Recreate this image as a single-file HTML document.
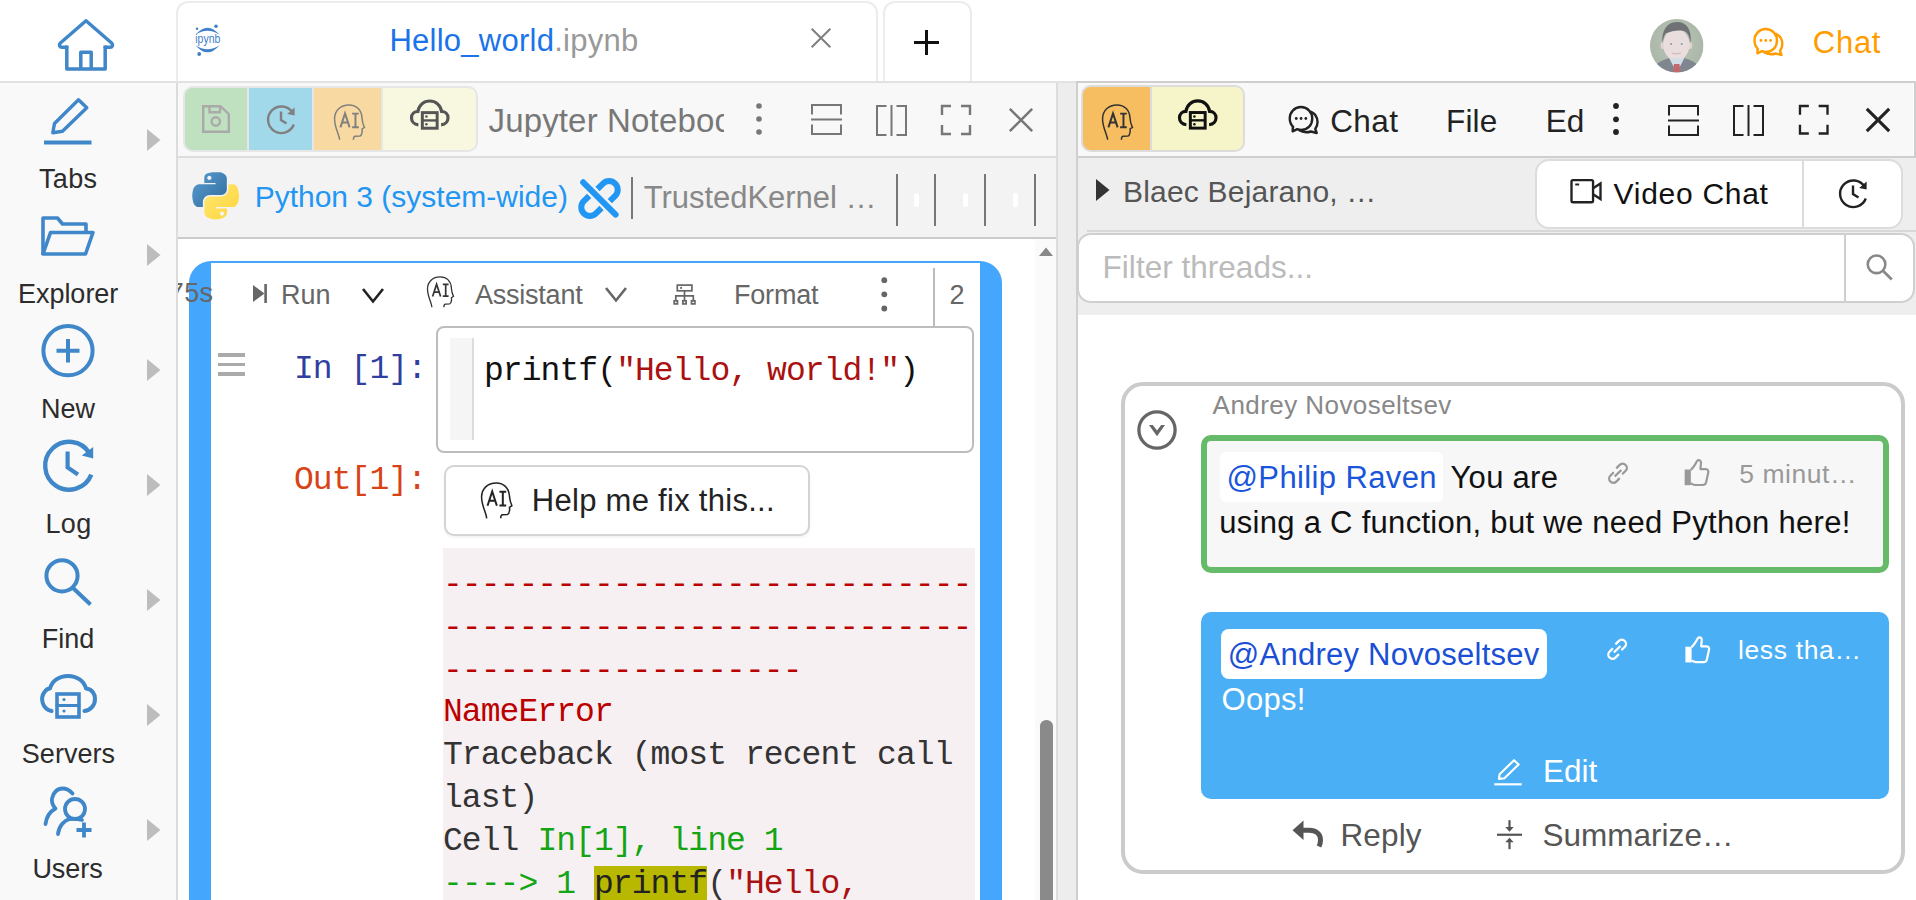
<!DOCTYPE html>
<html><head><meta charset="utf-8">
<style>
*{box-sizing:border-box;margin:0;padding:0}
html,body{width:1916px;height:900px;overflow:hidden;background:#fff;font-family:"Liberation Sans",sans-serif;}
.a{position:absolute}
svg{position:absolute;overflow:visible}
.t{position:absolute;white-space:nowrap;line-height:1}
</style></head><body>
<svg width="0" height="0" style="position:absolute">
<defs>
 <symbol id="ai" viewBox="0 0 27 31" overflow="visible">
  <path d="M4.9 31 C4.5 26 0.5 20.5 0.5 12.8 C0.5 5.5 5.8 0.7 13 0.7 C19.8 0.7 24 5.2 24.4 12 C24.6 15.2 25.2 17.6 26.5 20.2 L24.4 21.6 L24.6 23.6 C24.1 25 24.5 27.2 22.6 27.7 L18.4 28 C17.2 28.1 16.9 29 16.9 31" fill="none" stroke="currentColor" stroke-width="1.3"/>
  <path d="M5.6 20.2 L9.6 8 L13.6 20.2 M7 16 H12.2 M15.8 8.2 H21.6 M18.7 8.2 V20 M15.8 20 H21.6" fill="none" stroke="currentColor" stroke-width="1.7"/>
 </symbol>
 <symbol id="cloud" viewBox="0 0 40 31" overflow="visible">
  <path d="M8.5 26 C4 25.5 1.5 22.5 1.5 19 C1.5 15 4.5 12.5 8 12.5 C9 6 14 1.8 20 1.8 C26 1.8 31 6 32 12.5 C35.5 12.5 38.5 15 38.5 19 C38.5 22.5 36 25.5 31.5 26" fill="none" stroke="currentColor" stroke-width="3.2"/>
  <rect x="12.5" y="13.6" width="15" height="15.8" fill="none" stroke="currentColor" stroke-width="3"/>
  <path d="M12.5 21.5 H27.5" stroke="currentColor" stroke-width="2.4"/>
  <circle cx="16.6" cy="17.6" r="1.3" fill="currentColor"/><circle cx="16.6" cy="25.4" r="1.3" fill="currentColor"/>
 </symbol>
 <symbol id="hist" viewBox="0 0 30 30" overflow="visible">
  <path d="M26.5 8.5 A13.3 13.3 0 1 0 27.8 20.5" fill="none" stroke="currentColor" stroke-width="2.4"/>
  <path d="M28.6 3.5 L28.6 11.6 L21.2 10 Z" fill="currentColor"/>
  <path d="M15 7.5 V16 L20.5 19.5" fill="none" stroke="currentColor" stroke-width="2.4"/>
 </symbol>
 <symbol id="dots" viewBox="0 0 6 32" overflow="visible">
  <circle cx="3" cy="3" r="2.8" fill="currentColor"/><circle cx="3" cy="16" r="2.8" fill="currentColor"/><circle cx="3" cy="29" r="2.8" fill="currentColor"/>
 </symbol>
 <symbol id="hsplit" viewBox="0 0 31 31" overflow="visible">
  <path d="M1 10.5 V1 H30 V10.5 M1 20.5 V30 H30 V20.5 M0 15.4 H31" fill="none" stroke="currentColor" stroke-width="2"/>
 </symbol>
 <symbol id="vsplit" viewBox="0 0 31 31" overflow="visible">
  <path d="M10.5 1 H1 V30 H10.5 M20.5 1 H30 V30 H20.5 M15.5 0 V31" fill="none" stroke="currentColor" stroke-width="2"/>
 </symbol>
 <symbol id="full" viewBox="0 0 30 30" overflow="visible">
  <path d="M1 10 V1 H10 M20 1 H29 V10 M29 20 V29 H20 M10 29 H1 V20" fill="none" stroke="currentColor" stroke-width="2.4"/>
 </symbol>
 <symbol id="xx" viewBox="0 0 24 24" overflow="visible">
  <path d="M0.8 0.8 L23.2 23.2 M23.2 0.8 L0.8 23.2" fill="none" stroke="currentColor" stroke-width="2.5"/>
 </symbol>
 <symbol id="xxb" viewBox="0 0 24 24" overflow="visible">
  <path d="M0.8 0.8 L23.2 23.2 M23.2 0.8 L0.8 23.2" fill="none" stroke="currentColor" stroke-width="3.1"/>
 </symbol>
 <symbol id="chev" viewBox="0 0 22 15" overflow="visible">
  <path d="M1 1 L11 13.5 L21 1" fill="none" stroke="currentColor" stroke-width="2.6"/>
 </symbol>
 <symbol id="link" viewBox="0 0 24 23" overflow="visible">
  <path d="M10.2 6.5 L13.76 2.96 A4.3 4.3 0 0 1 19.84 9.04 L16.3 12.6 M13.8 16.5 L10.24 20.04 A4.3 4.3 0 0 1 4.16 13.96 L7.7 10.4 M8.6 14.9 L15.4 8.1" fill="none" stroke="currentColor" stroke-width="2.3"/>
 </symbol>
 <symbol id="thumb" viewBox="0 0 26 27" overflow="visible">
  <path d="M7.6 11 L10.5 7.5 C12 5.5 13 3.5 13.5 2.5 C14.5 0.5 17.5 0.6 17.8 3.5 L17.2 10.2 H22.5 C25 10.2 25.6 12.5 24.8 14.5 L22.8 23.5 C22.3 25.3 21 26 19.5 26 L12 26 C10 26 9 24.8 7.6 24.5" fill="none" stroke="currentColor" stroke-width="2.2" stroke-linejoin="round"/>
  <path d="M1.4 10.5 H7.6 V26.2 H1.4 Z" fill="currentColor"/>
 </symbol>
 <symbol id="pencil" viewBox="0 0 28 27" overflow="visible">
  <path d="M5.4 15.6 L20.2 1.2 L24.8 5.7 L10.3 19.6 L4.8 20.3 Z" fill="none" stroke="currentColor" stroke-width="2.2" stroke-linejoin="round"/>
  <path d="M0 25.8 H28" stroke="currentColor" stroke-width="2.2"/>
 </symbol>
 <symbol id="reply" viewBox="0 0 31 27" overflow="visible">
  <path d="M11.5 0.5 L0.5 10.3 L11.5 20 Z" fill="currentColor"/>
  <path d="M9 10.3 H17 C24 10.3 28.5 14 28.5 20 C28.5 22.5 28 24.5 27 26.5" fill="none" stroke="currentColor" stroke-width="5"/>
 </symbol>
 <symbol id="summ" viewBox="0 0 25 29" overflow="visible">
  <path d="M0 14.6 H25" stroke="currentColor" stroke-width="2.2"/>
  <path d="M12.5 0 V8" stroke="currentColor" stroke-width="2.2"/>
  <path d="M8.3 6.8 L16.7 6.8 L12.5 11.5 Z" fill="currentColor"/>
  <path d="M12.5 29 V21" stroke="currentColor" stroke-width="2.2"/>
  <path d="M8.3 22.2 L16.7 22.2 L12.5 17.5 Z" fill="currentColor"/>
 </symbol>
 <symbol id="chat2" viewBox="0 0 31 29" overflow="visible">
  <path d="M4.6 21.6 L4.4 26.4 L9 24.2 C10.3 24.7 11.6 25 13 25 C19.5 25 24 20 24 13.5 C24 7 19 2 12.7 2 C6.4 2 1.5 7 1.5 13.5 C1.5 16.8 2.8 19.8 5 22 Z" fill="none" stroke="currentColor" stroke-width="2.4" stroke-linejoin="round"/>
  <path d="M22.5 6.5 C26.5 8.5 29.3 12.5 29.3 17 C29.3 19.7 28.4 22 27 24 L28.5 28 L22.5 26.5 C21 27 19.5 27.3 18 27.3 C15 27.3 12.7 26.4 10.5 25" fill="none" stroke="currentColor" stroke-width="2.4" stroke-linejoin="round"/>
  <circle cx="8" cy="13.5" r="1.4" fill="currentColor"/><circle cx="12.8" cy="13.5" r="1.4" fill="currentColor"/><circle cx="17.6" cy="13.5" r="1.4" fill="currentColor"/>
 </symbol>
 <symbol id="search" viewBox="0 0 27 27" overflow="visible">
  <circle cx="10.5" cy="10.5" r="9" fill="none" stroke="currentColor" stroke-width="2.6"/>
  <path d="M17 17 L26 26" stroke="currentColor" stroke-width="2.8"/>
 </symbol>
 <symbol id="cam" viewBox="0 0 32 25" overflow="visible">
  <rect x="1.2" y="1.2" width="22" height="22.5" rx="1.5" fill="none" stroke="currentColor" stroke-width="2.4"/>
  <path d="M23.2 9.5 L30.8 4.5 V20.5 L23.2 15.5" fill="none" stroke="currentColor" stroke-width="2.4"/>
  <path d="M5 5.6 H9" stroke="currentColor" stroke-width="2"/>
 </symbol>
</defs></svg>
<div class="a" style="left:0px;top:0px;width:1916px;height:81px;background:#fff;"></div>
<div class="a" style="left:0px;top:81px;width:1916px;height:2px;background:#e2e2e2;"></div>
<div class="a" style="left:0px;top:83px;width:176px;height:817px;background:#f9f9f9;"></div>
<div class="a" style="left:176px;top:83px;width:2px;height:817px;background:#dcdcdc;"></div>
<svg class="a" style="left:0;top:0" width="180" height="900" viewBox="0 0 180 900" fill="none" stroke="#3f87c9" stroke-width="3.6" stroke-linejoin="round" stroke-linecap="round">
  <path d="M66.8 47.3 H62 C59.6 47.3 58.6 44.8 60.4 43 L86 20.8 L111.6 43 C113.4 44.8 112.4 47.3 110 47.3 H105.2" stroke-width="3.5"/>
  <path d="M66.8 45.5 V69 H105.2 V45.5" stroke-linecap="butt" stroke-width="3.5"/>
  <path d="M80.8 69 V52.2 H91.2 V69" stroke-linecap="butt" stroke-width="3.5"/>
  <path d="M54.5 123.5 L78.5 99.8 L86.8 107.8 L62.5 131.3 L52.8 132.8 Z" stroke-width="3.4"/>
  <path d="M44 142.5 H91.5" stroke-width="4" stroke-linecap="butt"/>
  <path d="M43 255 V218 H57.5 L62.5 224 H86 V232" stroke-linecap="butt"/>
  <path d="M43 254 L50.5 232.5 H93 L85.5 254 Z"/>
  <circle cx="68" cy="350.7" r="24.6" stroke-width="4"/>
  <path d="M56.5 350.7 H79.5 M68 339 V362.5" stroke-width="4" stroke-linecap="butt"/>
  <path d="M89.4 453.1 A23.9 23.9 0 1 0 91.3 474.6" stroke-width="4.4" stroke-linecap="butt"/>
  <path d="M93.2 447 L93.2 458.4 L81.8 455.4 Z" fill="#3f87c9" stroke="none"/>
  <path d="M67.6 451.5 V467.5 L78 474.5" stroke-width="4.2" stroke-linecap="butt" stroke-linejoin="miter"/>
  <circle cx="62" cy="575.8" r="15.6" stroke-width="4"/>
  <path d="M72.5 587.5 L90.5 604.5" stroke-width="4" stroke-linecap="butt"/>
  <path d="M51.5 711 C42 709 40 698 44.5 692 C46.5 689 49 688.5 50 688.5 C52 681 59 676 68 676 C77 676 84 681 86 688.5 C92 689 95 694 95 699 C95 705 91 710 84.5 711" stroke-width="4"/>
  <rect x="57" y="694" width="22" height="23" stroke-width="3.6" stroke-linejoin="miter"/>
  <path d="M57 705.5 H79" stroke-width="3"/>
  <circle cx="64" cy="699.5" r="1.6" fill="#3f87c9" stroke="none"/>
  <circle cx="64" cy="711" r="1.6" fill="#3f87c9" stroke="none"/>
  <path d="M45.5 824 C46.5 817 50 811.5 55.5 808.5 C52.5 805.5 51.5 802 52 798.5 C53 792.5 57.5 788.5 62.5 788.5 C66.5 788.5 70 790.5 72.5 793.5" stroke-width="3.8"/>
  <circle cx="75" cy="809" r="10" stroke-width="3.8"/>
  <path d="M58 834 C59 826 64 820.5 70 819 C74 818.5 78 819 82 820" stroke-width="3.8"/>
  <path d="M84 822.5 V837.5 M76.5 830 H91.5" stroke-width="3.8" stroke-linecap="butt"/>
</svg>
<svg class="a" style="left:0;top:0" width="180" height="900" viewBox="0 0 180 900" fill="#bdbdbd">
  <path d="M147 129 L160.5 140 L147 151 Z"/><path d="M147 244 L160.5 255 L147 266 Z"/>
  <path d="M147 359 L160.5 370 L147 381 Z"/><path d="M147 474 L160.5 485 L147 496 Z"/>
  <path d="M147 589 L160.5 600 L147 611 Z"/><path d="M147 704 L160.5 715 L147 726 Z"/>
  <path d="M147 819 L160.5 830 L147 841 Z"/>
</svg>
<div class="t" style="left:39.1px;top:165.7px;font-size:27px;color:#2c2c2c;font-family:'Liberation Sans',sans-serif;letter-spacing:0.27px;">Tabs</div>
<div class="t" style="left:17.9px;top:280.7px;font-size:27px;color:#2c2c2c;font-family:'Liberation Sans',sans-serif;letter-spacing:-0.01px;">Explorer</div>
<div class="t" style="left:41.0px;top:395.7px;font-size:27px;color:#2c2c2c;font-family:'Liberation Sans',sans-serif;letter-spacing:-0.05px;">New</div>
<div class="t" style="left:45.6px;top:510.7px;font-size:27px;color:#2c2c2c;font-family:'Liberation Sans',sans-serif;letter-spacing:0.25px;">Log</div>
<div class="t" style="left:41.7px;top:625.6px;font-size:27px;color:#2c2c2c;font-family:'Liberation Sans',sans-serif;letter-spacing:0.03px;">Find</div>
<div class="t" style="left:21.8px;top:740.6px;font-size:27px;color:#2c2c2c;font-family:'Liberation Sans',sans-serif;letter-spacing:0.04px;">Servers</div>
<div class="t" style="left:32.4px;top:855.6px;font-size:27px;color:#2c2c2c;font-family:'Liberation Sans',sans-serif;letter-spacing:-0.05px;">Users</div>
<div class="a" style="left:176px;top:1px;width:702px;height:80px;background:#fff;border:2px solid #ececec;border-radius:12px 12px 0 0;border-bottom:none;"></div>
<div class="a" style="left:882.5px;top:1px;width:89.5px;height:80px;background:#fff;border:2px solid #ececec;border-radius:12px 12px 0 0;border-bottom:none;"></div>
<svg class="a" style="left:185px;top:18px" width="45" height="45" viewBox="0 0 45 45">
 <path d="M10.5 16.8 Q22.5 2.5 34.5 16.8 Q22.5 8.8 10.5 16.8 Z" fill="#3f80c8"/>
 <path d="M10.5 27.2 Q22.5 41.5 34.5 27.2 Q22.5 35.2 10.5 27.2 Z" fill="#3f80c8"/>
 <circle cx="12" cy="10.8" r="1.2" fill="#3f80c8"/><circle cx="31" cy="8.3" r="1.8" fill="#3f80c8"/><circle cx="14.2" cy="36" r="1.9" fill="#3f80c8"/>
 <text x="22.8" y="25" font-family="Liberation Sans" font-size="12.8" fill="#3f80c8" text-anchor="middle" textLength="25" lengthAdjust="spacingAndGlyphs">ipynb</text>
</svg>
<div class="t" style="left:389.4px;top:24.7px;font-size:31px;color:#1a73e8;font-family:'Liberation Sans',sans-serif;letter-spacing:0.26px;">Hello_world<span style="color:#999">.ipynb</span></div>
<svg class="a" style="left:811px;top:28px;color:#808080" width="20" height="20"><use href="#xx" width="20" height="20"/></svg>
<svg class="a" style="left:913px;top:29px" width="27" height="27"><path d="M1 13.5 H26 M13.5 1 V26" stroke="#111" stroke-width="3"/></svg>
<svg class="a" style="left:1650.2px;top:19.2px" width="53.5" height="53.5" viewBox="0 0 54 54">
 <defs><clipPath id="avc"><circle cx="27" cy="27" r="27"/></clipPath>
 <radialGradient id="avbg" cx="50%" cy="45%" r="60%"><stop offset="0" stop-color="#b9c4b6"/><stop offset="1" stop-color="#a9b6a6"/></radialGradient></defs>
 <g clip-path="url(#avc)">
  <rect width="54" height="54" fill="url(#avbg)"/>
  <ellipse cx="12.8" cy="27" rx="2.2" ry="3.5" fill="#e0d2d0"/><ellipse cx="40.5" cy="27" rx="2.2" ry="3.5" fill="#e0d2d0"/>
  <ellipse cx="26.6" cy="26" rx="13.2" ry="16" fill="#e9dedd"/>
  <path d="M12.5 24 C11.5 12 17 3 27 3 C37 3 42 10 41.2 24 C39.5 17 38 13 34 12 C28 11 22 12 16 14.5 C14 17 13.5 20 12.5 24 Z" fill="#6f7174"/>
  <path d="M1 54 C3 46 11 41.5 19.5 39.5 L27 54 L34.5 39.5 C43 41.5 51 46 53 54 Z" fill="#80868f"/>
  <path d="M19.5 39.5 L34.5 39.5 L27 54 Z" fill="#d2dde8"/>
  <path d="M24.3 45.5 L29.7 45.5 L31 54 L23 54 Z" fill="#c06a6e"/>
  <circle cx="21.2" cy="25.2" r="1.1" fill="#8a9bb0"/><circle cx="32" cy="25.2" r="1.1" fill="#8a9bb0"/>
  <path d="M22 34.5 Q26.5 36 31 34.5" stroke="#c9b4b4" stroke-width="1" fill="none"/>
 </g>
</svg>
<svg class="a" style="left:1753px;top:27px;color:#ff9d00" width="31" height="29"><use href="#chat2" width="31" height="29"/></svg>
<div class="t" style="left:1812.8px;top:26.7px;font-size:31px;color:#ff9d00;font-family:'Liberation Sans',sans-serif;letter-spacing:0.73px;">Chat</div>
<div class="a" style="left:178px;top:83px;width:878px;height:73px;background:#f8f8f8;"></div>
<div class="a" style="left:178px;top:156px;width:878px;height:2px;background:#dcdcdc;"></div>
<div class="a" style="left:178px;top:158px;width:878px;height:79px;background:#f3f3f3;"></div>
<div class="a" style="left:178px;top:237px;width:878px;height:2px;background:#cbcbcb;"></div>
<div class="a" style="left:178px;top:239px;width:878px;height:661px;background:#fff;"></div>
<div class="a" style="left:1056px;top:83px;width:2px;height:817px;background:#dcdcdc;"></div>
<div class="a" style="left:1058px;top:83px;width:18px;height:817px;background:#ededed;"></div>
<div class="a" style="left:183px;top:85.5px;width:295px;height:66.5px;background:#e6e6e6;border:none;border-radius:10px;"></div>
<div class="a" style="left:185px;top:87.5px;width:291px;height:62.5px;border-radius:8px;overflow:hidden"><div class="a" style="left:0;top:0;width:62px;height:63px;background:#bfe1bf"></div><div class="a" style="left:64px;top:0;width:63px;height:63px;background:#a1d9ea"></div><div class="a" style="left:129px;top:0;width:67px;height:63px;background:#f8d9a1"></div><div class="a" style="left:198px;top:0;width:93px;height:63px;background:#f8f8e1"></div></div>
<svg class="a" style="left:202px;top:105px" width="28" height="28" viewBox="0 0 28 28" fill="none" stroke="#aaa" stroke-width="2.4">
 <path d="M1.2 1.2 H18.5 L26.8 9.2 V26.8 H1.2 Z"/><path d="M7.5 1.2 V7.2 H18 V1.2"/><circle cx="13.8" cy="16.5" r="4.2"/></svg>
<svg class="a" style="left:265.5px;top:103.5px;color:#808080;" width="30" height="30"><use href="#hist" width="30" height="30"/></svg>
<svg class="a" style="left:333.5px;top:103.5px;color:#808080;" width="31" height="36"><use href="#ai" width="31" height="36"/></svg>
<svg class="a" style="left:410px;top:98.8px;color:#555;" width="39.5" height="31"><use href="#cloud" width="39.5" height="31"/></svg>
<div class="t" style="left:488.5px;top:103.8px;font-size:33px;color:#777;font-family:'Liberation Sans',sans-serif;width:235.5px;overflow:hidden;letter-spacing:0.15px">Jupyter Noteboc</div>
<svg class="a" style="left:756.3px;top:103px;color:#777;" width="6" height="32"><use href="#dots" width="6" height="32"/></svg>
<svg class="a" style="left:811px;top:104px;color:#777;" width="31" height="31"><use href="#hsplit" width="31" height="31"/></svg>
<svg class="a" style="left:875.5px;top:104.5px;color:#777;" width="31" height="31"><use href="#vsplit" width="31" height="31"/></svg>
<svg class="a" style="left:941px;top:105px;color:#777;" width="30" height="30"><use href="#full" width="30" height="30"/></svg>
<svg class="a" style="left:1008.5px;top:107.5px;color:#777;" width="24" height="24"><use href="#xx" width="24" height="24"/></svg>
<svg class="a" style="left:192px;top:171.5px" width="47" height="47" viewBox="0 0 110 110">
<defs><linearGradient id="pyb" x1="0" y1="0" x2="1" y2="1"><stop offset="0" stop-color="#5a9fd4"/><stop offset="1" stop-color="#306998"/></linearGradient>
<linearGradient id="pyy" x1="0" y1="0" x2="1" y2="1"><stop offset="0" stop-color="#ffe873"/><stop offset="1" stop-color="#ffd43b"/></linearGradient></defs>
<path fill="url(#pyb)" d="M54.9 0.5c-4.6 0-9 .4-12.8 1.1C30.7 3.6 28.7 7.7 28.7 15.4v10.1h26.4v3.4H18.9c-7.7 0-14.4 4.6-16.5 13.3-2.4 10-2.5 16.2 0 26.7 1.9 7.8 6.3 13.3 14 13.3h9.1v-12c0-8.7 7.5-16.3 16.5-16.3h26.3c7.3 0 13.2-6 13.2-13.3V15.4c0-7.1-6-12.5-13.2-13.7C73.8 .9 69.1 .5 54.9 .5zM40.6 8.6c2.7 0 5 2.3 5 5 0 2.8-2.2 5-5 5-2.7 0-5-2.2-5-5 0-2.7 2.2-5 5-5z"/>
<path fill="url(#pyy)" d="M85.1 28.9v11.7c0 9-7.7 16.6-16.5 16.6H42.3c-7.2 0-13.2 6.200-13.2 13.300v25.1c0 7.2 6.2 11.4 13.2 13.4 8.4 2.5 16.4 2.9 26.3 0 6.6-1.9 13.2-5.7 13.2-13.4V85.5H55.4v-3.4h39.5c7.7 0 10.5-5.4 13.2-13.3 2.8-8.2 2.6-16.1 0-26.7-1.9-7.6-5.5-13.3-13.2-13.3h-9.8zM70.3 92.3c2.7 0 5 2.2 5 5 0 2.8-2.2 5-5 5-2.7 0-5-2.3-5-5 0-2.8 2.3-5 5-5z"/>
</svg>
<div class="t" style="left:254.7px;top:181.5px;font-size:30px;color:#2196f3;font-family:'Liberation Sans',sans-serif;letter-spacing:-0.01px;">Python 3 (system-wide)</div>
<svg class="a" style="left:578.5px;top:177.5px" width="41" height="41" viewBox="0 0 41 41" fill="none" stroke="#2196f3" stroke-width="6">
 <path d="M4.2 4.3 L36.6 36.6" stroke-linecap="round"/>
 <path d="M18.5 11 L24 5.6 A8.6 8.6 0 0 1 36.2 17.8 L30.8 23.2"/>
 <path d="M22.5 30 L17 35.4 A8.6 8.6 0 0 1 4.8 23.2 L10.2 17.8"/>
</svg>
<div class="a" style="left:631px;top:177px;width:2px;height:41.5px;background:#777;"></div>
<div class="t" style="left:643.8px;top:181.8px;font-size:31px;color:#888;font-family:'Liberation Sans',sans-serif;letter-spacing:-0.04px;">TrustedKernel …</div>
<div class="a" style="left:896px;top:174px;width:2.2px;height:52px;background:#777;"></div>
<div class="a" style="left:934px;top:174px;width:2.2px;height:52px;background:#777;"></div>
<div class="a" style="left:984px;top:174px;width:2.2px;height:52px;background:#777;"></div>
<div class="a" style="left:1034px;top:174px;width:2.2px;height:52px;background:#777;"></div>
<div class="a" style="left:914px;top:193px;width:5px;height:14px;background:#fff;border:none;border-radius:3px;"></div>
<div class="a" style="left:963px;top:193px;width:5px;height:14px;background:#fff;border:none;border-radius:3px;"></div>
<div class="a" style="left:1013px;top:193px;width:5px;height:14px;background:#fff;border:none;border-radius:3px;"></div>
<div class="a" style="left:1035px;top:239px;width:21px;height:661px;background:#fafafa;"></div>
<svg class="a" style="left:1039px;top:246.5px" width="14" height="9"><path d="M0 9 L7 0.5 L14 9 Z" fill="#888"/></svg>
<div class="a" style="left:1040.3px;top:719.5px;width:12.6px;height:200px;background:#8a8a8a;border:none;border-radius:6.3px;"></div>
<div class="a" style="left:189px;top:261px;width:813px;height:700px;background:#44a6fc;border:none;border-radius:22px 22px 0 0;"></div>
<div class="a" style="left:211px;top:263px;width:769px;height:700px;background:#fff;"></div>
<div class="a" style="left:178px;top:270px;width:42px;height:40px;overflow:hidden">
<div class="t" style="left:-48px;width:83.3px;text-align:right;top:10.1px;font-size:27px;color:#666;letter-spacing:0.3px">75s</div>
</div>
<svg class="a" style="left:252.5px;top:284px" width="14" height="19"><path d="M0 1 L11.5 9.5 L0 18 Z" fill="#666"/><rect x="11.3" y="0" width="2.6" height="19" fill="#666"/></svg>
<div class="t" style="left:281.0px;top:281.7px;font-size:27px;color:#666;font-family:'Liberation Sans',sans-serif;letter-spacing:0.05px;">Run</div>
<svg class="a" style="left:361.5px;top:288px;color:#222;" width="22" height="15"><use href="#chev" width="22" height="15"/></svg>
<svg class="a" style="left:427px;top:276px;color:#333;" width="27" height="31.4"><use href="#ai" width="27" height="31.4"/></svg>
<div class="t" style="left:474.9px;top:281.7px;font-size:27px;color:#666;font-family:'Liberation Sans',sans-serif;letter-spacing:-0.22px;">Assistant</div>
<svg class="a" style="left:604.5px;top:286.5px;color:#666;" width="22" height="15"><use href="#chev" width="22" height="15"/></svg>
<svg class="a" style="left:673px;top:284px" width="23" height="21" viewBox="0 0 23 21" fill="none" stroke="#666" stroke-width="1.7">
 <rect x="4.3" y="1.1" width="14.6" height="5.7"/><circle cx="8.1" cy="3.9" r="1.05" fill="#666" stroke="none"/>
 <path d="M11.5 6.8 V16.8 M2.8 16.8 V11.9 H20.3 V16.8"/>
 <rect x="1.2" y="16.8" width="3.3" height="3.1"/><rect x="9.8" y="16.8" width="3.3" height="3.1"/><rect x="18.5" y="16.8" width="3.4" height="3.1"/></svg>
<div class="t" style="left:734.0px;top:281.7px;font-size:27px;color:#666;font-family:'Liberation Sans',sans-serif;letter-spacing:-0.20px;">Format</div>
<svg class="a" style="left:880px;top:276px" width="9" height="36"><circle cx="4.3" cy="4.2" r="2.9" fill="#666"/><circle cx="4.3" cy="18.3" r="2.9" fill="#666"/><circle cx="4.3" cy="32.5" r="2.9" fill="#666"/></svg>
<div class="a" style="left:933px;top:268px;width:2px;height:57.5px;background:#bbb;"></div>
<div class="t" style="left:949.5px;top:281.7px;font-size:27px;color:#666;font-family:'Liberation Sans',sans-serif;">2</div>
<div class="a" style="left:218px;top:353px;width:27px;height:3.5px;background:#aaa;"></div>
<div class="a" style="left:218px;top:362.5px;width:27px;height:3.5px;background:#aaa;"></div>
<div class="a" style="left:218px;top:372px;width:27px;height:3.5px;background:#aaa;"></div>
<div class="t" style="left:294.0px;top:353.2px;font-size:33px;color:#303f9f;font-family:'Liberation Mono',monospace;letter-spacing:-0.93px">In [1]:</div>
<div class="a" style="left:435.8px;top:325.5px;width:538.2px;height:127px;background:#fff;border:2px solid #bdbdbd;border-radius:8px;"></div>
<div class="a" style="left:450px;top:338px;width:24px;height:102px;background:#f5f5f5;"></div>
<div class="a" style="left:472px;top:338px;width:2px;height:102px;background:#dcdcdc;"></div>
<div class="t" style="left:484.0px;top:355.1px;font-size:33px;color:#111;font-family:'Liberation Mono',monospace;letter-spacing:-0.93px">printf(<span style="color:#a11">"Hello, world!"</span>)</div>
<div class="t" style="left:294.0px;top:463.6px;font-size:33px;color:#d84315;font-family:'Liberation Mono',monospace;letter-spacing:-0.93px">Out[1]:</div>
<div class="a" style="left:443.5px;top:465.3px;width:366px;height:71px;background:#fff;border:2px solid #d4d4d4;border-radius:10px;box-shadow:0 2px 3px rgba(0,0,0,0.05)"></div>
<svg class="a" style="left:481px;top:482.3px;color:#222;" width="31.5" height="36.5"><use href="#ai" width="31.5" height="36.5"/></svg>
<div class="t" style="left:531.8px;top:484.6px;font-size:31px;color:#222;font-family:'Liberation Sans',sans-serif;letter-spacing:0.28px;">Help me fix this...</div>
<div class="a" style="left:443px;top:548.4px;width:532px;height:400px;background:#f7f0f3;"></div>
<div class="t" style="left:443.0px;top:568.8px;font-size:33px;color:#b00;font-family:'Liberation Mono',monospace;letter-spacing:-0.93px">----------------------------</div>
<div class="t" style="left:443.0px;top:611.8px;font-size:33px;color:#b00;font-family:'Liberation Mono',monospace;letter-spacing:-0.93px">----------------------------</div>
<div class="t" style="left:443.0px;top:654.8px;font-size:33px;color:#b00;font-family:'Liberation Mono',monospace;letter-spacing:-0.93px">-------------------</div>
<div class="t" style="left:443.0px;top:696.3px;font-size:33px;color:#b00;font-family:'Liberation Mono',monospace;letter-spacing:-0.93px">NameError</div>
<div class="t" style="left:443.0px;top:739.3px;font-size:33px;color:#333;font-family:'Liberation Mono',monospace;letter-spacing:-0.93px">Traceback (most recent call</div>
<div class="t" style="left:443.0px;top:782.3px;font-size:33px;color:#333;font-family:'Liberation Mono',monospace;letter-spacing:-0.93px">last)</div>
<div class="t" style="left:443.0px;top:825.3px;font-size:33px;color:#333;font-family:'Liberation Mono',monospace;letter-spacing:-0.93px">Cell <span style="color:#14a514">In[1], line 1</span></div>
<div class="t" style="left:443.0px;top:868.3px;font-size:33px;color:#14a514;font-family:'Liberation Mono',monospace;letter-spacing:-0.93px">----&gt; 1 <span style="background:#b8b800;color:#222">printf</span><span style="color:#333">(</span><span style="color:#a11">"Hello,</span></div>
<div class="a" style="left:1076px;top:81px;width:840px;height:2px;background:#cfcfcf;"></div>
<div class="a" style="left:1075.5px;top:83px;width:2px;height:817px;background:#cfcfcf;"></div>
<div class="a" style="left:1913.5px;top:81px;width:2.5px;height:77px;background:#cfcfcf;"></div>
<div class="a" style="left:1078px;top:83px;width:835px;height:73px;background:#f8f8f8;"></div>
<div class="a" style="left:1078px;top:156px;width:838px;height:2px;background:#cfcfcf;"></div>
<div class="a" style="left:1078px;top:158px;width:838px;height:157px;background:#eeeeee;"></div>
<div class="a" style="left:1087px;top:230.2px;width:829px;height:2px;background:#d8d8d8;"></div>
<div class="a" style="left:1078px;top:315px;width:838px;height:585px;background:#fff;"></div>
<div class="a" style="left:1081.3px;top:84.8px;width:164px;height:67.2px;background:#dcdcdc;border:none;border-radius:10px;"></div>
<div class="a" style="left:1083.3px;top:86.8px;width:160px;height:63.2px;border-radius:8px;overflow:hidden"><div class="a" style="left:0;top:0;width:67px;height:63px;background:#f6be60"></div><div class="a" style="left:69px;top:0;width:91px;height:63px;background:#f5f5c9"></div></div>
<svg class="a" style="left:1101.6px;top:103.6px;color:#333;" width="31" height="36"><use href="#ai" width="31" height="36"/></svg>
<svg class="a" style="left:1178px;top:99.1px;color:#111;" width="39.5" height="30.8"><use href="#cloud" width="39.5" height="30.8"/></svg>
<svg class="a" style="left:1288px;top:105px;color:#222;" width="31.5" height="29"><use href="#chat2" width="31.5" height="29"/></svg>
<div class="t" style="left:1330.2px;top:105.5px;font-size:31.5px;color:#222;font-family:'Liberation Sans',sans-serif;letter-spacing:0.40px;">Chat</div>
<div class="t" style="left:1446.0px;top:105.5px;font-size:31.5px;color:#222;font-family:'Liberation Sans',sans-serif;letter-spacing:0.17px;">File</div>
<div class="t" style="left:1545.8px;top:105.5px;font-size:31.5px;color:#222;font-family:'Liberation Sans',sans-serif;width:38px;overflow:hidden">Ed</div>
<svg class="a" style="left:1612px;top:102px" width="9" height="34"><circle cx="4" cy="4" r="2.9" fill="#222"/><circle cx="4" cy="17.3" r="2.9" fill="#222"/><circle cx="4" cy="30" r="2.9" fill="#222"/></svg>
<svg class="a" style="left:1668.3px;top:104.5px;color:#222;" width="31" height="31"><use href="#hsplit" width="31" height="31"/></svg>
<svg class="a" style="left:1733px;top:104.5px;color:#222;" width="31" height="31"><use href="#vsplit" width="31" height="31"/></svg>
<svg class="a" style="left:1799px;top:105px;color:#222;" width="29.5" height="29.5"><use href="#full" width="29.5" height="29.5"/></svg>
<svg class="a" style="left:1866px;top:107.7px;color:#222;" width="24" height="24"><use href="#xxb" width="24" height="24"/></svg>
<svg class="a" style="left:1096px;top:179px" width="14" height="22"><path d="M0 0 L13.5 11 L0 22 Z" fill="#333"/></svg>
<div class="t" style="left:1123.0px;top:177.1px;font-size:30px;color:#555;font-family:'Liberation Sans',sans-serif;letter-spacing:0.20px;">Blaec Bejarano, …</div>
<div class="a" style="left:1534.7px;top:159px;width:368.8px;height:69.5px;background:#fff;border:2px solid #dcdcdc;border-radius:14px;"></div>
<div class="a" style="left:1802px;top:160px;width:2px;height:67.5px;background:#dcdcdc;"></div>
<svg class="a" style="left:1570px;top:179.3px;color:#222;" width="32" height="24.5"><use href="#cam" width="32" height="24.5"/></svg>
<div class="t" style="left:1613.6px;top:178.7px;font-size:30px;color:#111;font-family:'Liberation Sans',sans-serif;letter-spacing:0.71px;">Video Chat</div>
<svg class="a" style="left:1837.5px;top:178.2px;color:#222;" width="30" height="30"><use href="#hist" width="30" height="30"/></svg>
<div class="a" style="left:1077px;top:232.8px;width:838px;height:70.7px;background:#fff;border:2px solid #cfcfcf;border-radius:14px;"></div>
<div class="a" style="left:1844px;top:235px;width:2px;height:67px;background:#cfcfcf;"></div>
<div class="t" style="left:1102.6px;top:252.2px;font-size:31.5px;color:#bbb;font-family:'Liberation Sans',sans-serif;letter-spacing:0.02px;">Filter threads...</div>
<svg class="a" style="left:1866px;top:254px;color:#888;" width="27" height="26.5"><use href="#search" width="27" height="26.5"/></svg>
<div class="a" style="left:1121px;top:381.8px;width:784px;height:492.5px;background:#fff;border:4px solid #cbcbcb;border-radius:22px;"></div>
<svg class="a" style="left:1136px;top:409px" width="42" height="42" viewBox="0 0 42 42" fill="none" stroke="#666" stroke-width="3.3">
 <circle cx="21" cy="21" r="18.1"/><path d="M13 16 L16.8 16 L21 21.4 L25.2 16 L29 16 L21 27.3 Z" fill="#666" stroke="none"/></svg>
<div class="t" style="left:1212.6px;top:391.9px;font-size:26px;color:#888;font-family:'Liberation Sans',sans-serif;letter-spacing:0.44px;">Andrey Novoseltsev</div>
<div class="a" style="left:1201px;top:435px;width:687.5px;height:137.5px;background:#f7f7f7;border:6px solid #66bb6a;border-radius:10px;"></div>
<div class="a" style="left:1220px;top:452px;width:223px;height:49.5px;background:#fff;border:none;border-radius:6px;"></div>
<div class="t" style="left:1226.5px;top:462.1px;font-size:31px;color:#1a56db;font-family:'Liberation Sans',sans-serif;letter-spacing:0.38px;">@Philip Raven</div>
<div class="t" style="left:1450.5px;top:461.5px;font-size:31px;color:#111;font-family:'Liberation Sans',sans-serif;letter-spacing:0.28px;">You are</div>
<svg class="a" style="left:1605.5px;top:461.5px;color:#999;" width="24" height="22.5"><use href="#link" width="24" height="22.5"/></svg>
<svg class="a" style="left:1683px;top:458.7px;color:#999;" width="26.5" height="27"><use href="#thumb" width="26.5" height="27"/></svg>
<div class="t" style="left:1739.3px;top:460.7px;font-size:26.5px;color:#999;font-family:'Liberation Sans',sans-serif;letter-spacing:0.53px;">5 minut…</div>
<div class="t" style="left:1219.2px;top:506.6px;font-size:31px;color:#111;font-family:'Liberation Sans',sans-serif;letter-spacing:0.29px;">using a C function, but we need Python here!</div>
<div class="a" style="left:1201px;top:611.8px;width:687.5px;height:187.2px;background:#4aaff5;border:none;border-radius:10px;"></div>
<div class="a" style="left:1221px;top:629px;width:326px;height:49.7px;background:#fff;border:none;border-radius:8px;"></div>
<div class="t" style="left:1227.8px;top:638.9px;font-size:31px;color:#1a4fd6;font-family:'Liberation Sans',sans-serif;letter-spacing:0.24px;">@Andrey Novoseltsev</div>
<svg class="a" style="left:1604.5px;top:638px;color:#fff;" width="24.3" height="22.5"><use href="#link" width="24.3" height="22.5"/></svg>
<svg class="a" style="left:1683.8px;top:635.5px;color:#fff;" width="26" height="27.4"><use href="#thumb" width="26" height="27.4"/></svg>
<div class="t" style="left:1737.9px;top:637.3px;font-size:26.5px;color:#fff;font-family:'Liberation Sans',sans-serif;letter-spacing:0.66px;">less tha…</div>
<div class="t" style="left:1221.6px;top:683.6px;font-size:31px;color:#fff;font-family:'Liberation Sans',sans-serif;letter-spacing:0.28px;">Oops!</div>
<svg class="a" style="left:1494.3px;top:758.7px;color:#fff;" width="28" height="26.5"><use href="#pencil" width="28" height="26.5"/></svg>
<div class="t" style="left:1543.1px;top:755.8px;font-size:31.5px;color:#fff;font-family:'Liberation Sans',sans-serif;letter-spacing:-0.07px;">Edit</div>
<svg class="a" style="left:1292px;top:820.3px;color:#555;" width="31" height="27"><use href="#reply" width="31" height="27"/></svg>
<div class="t" style="left:1340.5px;top:820.2px;font-size:31.5px;color:#555;font-family:'Liberation Sans',sans-serif;letter-spacing:0.12px;">Reply</div>
<svg class="a" style="left:1496.5px;top:820.3px;color:#555;" width="25" height="29.3"><use href="#summ" width="25" height="29.3"/></svg>
<div class="t" style="left:1542.4px;top:819.8px;font-size:31.5px;color:#555;font-family:'Liberation Sans',sans-serif;letter-spacing:0.03px;">Summarize…</div>
</body></html>
